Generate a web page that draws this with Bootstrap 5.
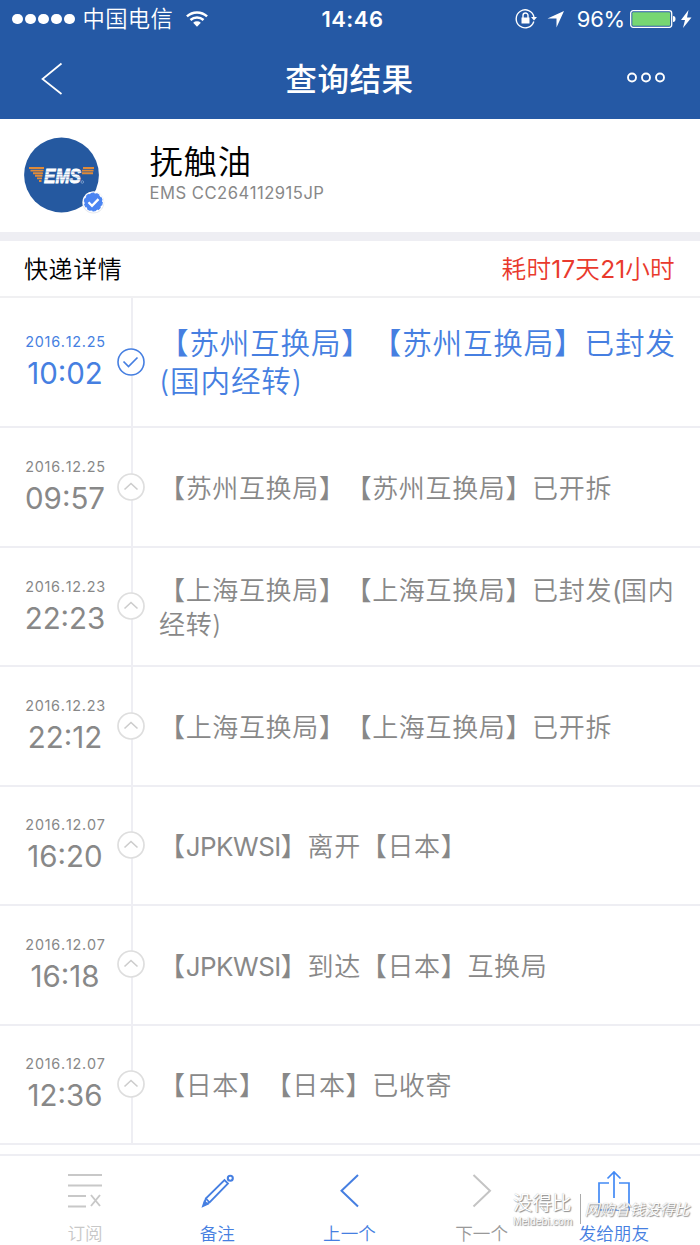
<!DOCTYPE html>
<html lang="zh-CN">
<head>
<meta charset="utf-8">
<meta name="viewport" content="width=device-width, initial-scale=1">
<title>查询结果</title>
<link href="https://cdn.jsdelivr.net/npm/bootstrap@5.3.0/dist/css/bootstrap.min.css" rel="stylesheet">
<style>
body{font-family:Inter,"Noto Sans CJK SC",sans-serif;font-weight:350;width:700px;height:1245px;overflow:hidden;color:#000;line-height:1;white-space:nowrap;text-spacing-trim:space-all;font-feature-settings:"chws" 0,"halt" 0,"kern" 0}
svg{display:block;flex:none}
.topbar{height:119.3px;background:#2559a5;color:#fff}
.statusbar{height:38px;font-size:22px;padding-left:12px;padding-right:8px}
.side-box{width:270px}
.dot{width:10.8px;height:10.8px;border-radius:50%;background:#fff;margin-right:2.3px;flex:none}
.carrier{font-size:22.3px;letter-spacing:.4px;margin-left:5px}
.clock{font-size:22px;font-weight:600;letter-spacing:.5px;padding-left:1px}
.power{font-weight:400;letter-spacing:-.2px}
.navline{height:78px;padding:0 35px 0 41px}
.nav-title{font-size:31.6px;font-weight:500;letter-spacing:.5px;padding-top:5px;padding-right:7px}
.profile{height:112.7px;padding-left:24px}
.logo-wrap{width:125.5px}
.pname{font-size:33.3px;letter-spacing:.8px;line-height:40px}
.pnum{font-size:16.6px;letter-spacing:.5px;color:#888;line-height:22px;font-weight:400}
.ptext{margin-top:-6px}
.gap-band{height:9px;background:#eeeef3}
.detail-head{height:57.5px;padding:2px 25px 0 24px;border-bottom:2px solid #f0f0f2;font-size:24px;letter-spacing:.6px}
.elapsed{color:#e93a2d;font-size:24.6px;letter-spacing:.3px}
.elapsed b{font-weight:400;letter-spacing:0}
.track{height:119.43px;border-bottom:2px solid #eeeef3;color:#888}
.track.latest{height:130px;color:#467fe1}
.when{width:133px;border-right:2px solid #eeeef3;padding-right:1px;font-weight:400}
.tdate{font-size:14.4px;letter-spacing:.75px;line-height:18px;padding-left:1px}
.ttime{font-size:29.5px;line-height:36px;margin-top:4px}
.mark-icon{left:115.700px;top:50%;transform:translateY(-50%);margin-top:-.5px}
.what{padding-left:26px;padding-top:3px;font-size:26px;letter-spacing:.65px;line-height:33.7px}
.latest .what{font-size:29.6px;letter-spacing:.8px;line-height:38px;padding-top:0}
.latin{letter-spacing:-.5px;font-weight:400}
.bottombar{margin-top:9px;height:92px;border-top:2px solid #eeeef3;color:#467fe1;font-size:17.600px;padding-left:19px;padding-right:20px}
.tab-item{width:132.2px;padding-top:14px}
.tab-item span{margin-top:10.500px;line-height:22px}
.off{color:#c8c8c8}.dim{color:#999}
.watermark{left:513px;top:1191px;color:#fff;text-shadow:1px 1px 1px #888,0 0 1px #aaa}
.wm-a{font-size:19.500px;line-height:24px}
.wm-b{font-family:"Liberation Sans",sans-serif;font-size:10.500px;line-height:12px}
.wm-line{width:1px;height:30px;background:#aaa;margin:0 4px 0 7px}
.wm-c{font-size:15px;font-style:italic}
</style>
</head>
<body class="bg-white position-relative">
<header class="topbar">
 <div class="statusbar d-flex align-items-center justify-content-between">
  <div class="side-box d-flex align-items-center"><i class="dot"></i><i class="dot"></i><i class="dot"></i><i class="dot"></i><i class="dot"></i><span class="carrier">中国电信</span>
   <svg class="ms-2 ps-1" width="28" height="20" viewBox="-1 0 25 20" fill="none" stroke="#fff" stroke-width="2.6"><path d="M1 7.2a15.5 15.5 0 0 1 21 0M4.7 11a10.3 10.3 0 0 1 13.6 0"/><path d="M7.5 14a6 6 0 0 1 8 0L11.500 18Z" fill="#fff" stroke="none"/></svg></div>
  <div class="clock">14:46</div>
  <div class="side-box d-flex align-items-center justify-content-end">
   <svg width="23" height="22" viewBox="0 0 23 22" fill="none" stroke="#fff" stroke-width="1.4"><path d="M18.800 13.500A9 9 0 1 1 19 9"/><path d="M16 9h6l-3 3.600Z" fill="#fff" stroke="none"/><path d="M6.500 9.500h8v6h-8Z" fill="#fff" stroke="none"/><path d="M8 10V7.500a2.500 2.500 0 0 1 5 0V10"/></svg>
   <svg class="ms-2 me-2" width="19" height="18" viewBox="0 0 19 18"><path d="M1.500 8.500 18 1 10.500 17.500V8.500Z" fill="#fff"/></svg>
   <span class="power ms-1">96%</span>
   <svg class="ms-1" width="47" height="20" viewBox="0 0 47 20"><rect x="1.700" y="1.700" width="41" height="16.600" rx="2.500" fill="none" stroke="#fff" stroke-width="1.300"/><rect x="3.300" y="3.300" width="37.800" height="13.400" rx="1" fill="#76d672"/><path d="M44 7q2.500 0 2.500 3t-2.500 3Z" fill="#fff"/></svg>
   <svg class="ms-1" width="12" height="18" viewBox="0 0 12 18"><path d="M8.500 0 1 10h4L3 18 11.500 7.500H7Z" fill="#fff"/></svg>
  </div>
 </div>
 <nav class="navline d-flex align-items-center justify-content-between">
  <svg class="mt-1" width="38" height="34" viewBox="0 0 38 34"><path d="M20.500 1.500 1.500 17l19 15" fill="none" stroke="#fff" stroke-width="1.700"/></svg>
  <h1 class="nav-title m-0">查询结果</h1>
  <svg width="38" height="12" viewBox="0 0 38 12" fill="none" stroke="#fff" stroke-width="1.900"><circle cx="5" cy="6.500" r="4"/><circle cx="19" cy="6.500" r="4"/><circle cx="33" cy="6.500" r="4"/></svg>
 </nav>
</header>
<section class="profile d-flex align-items-center">
 <div class="logo-wrap"><svg width="82" height="77" viewBox="0 0 82 77">
  <circle cx="37.500" cy="38" r="37.400" fill="#2559a0"/>
  <path d="M5 31h15M6.500 33.600h13M9 36.200h10M11 38.800h7.500M13 41.400h5M15 44h2.500M59 31h11M58 33.600h11.500M58 36.200h11" stroke="#e08a38" stroke-width="1.900"/>
  <text x="20" y="46" textLength="37" lengthAdjust="spacingAndGlyphs" font-family="Liberation Sans,sans-serif" font-size="20.500" font-weight="700" font-style="italic" fill="#fff" stroke="#fff" stroke-width=".9">EMS</text>
  <path d="M18 34.900h40M18 37.500h40M18 40.100h40M18 42.700h40" stroke="#2559a0" stroke-width=".6" opacity=".6"/>
  <circle cx="58.300" cy="45" r="1.300" fill="none" stroke="#a9bfdf" stroke-width=".6"/>
  <circle cx="69.300" cy="65.500" r="11" fill="#e6e9ee"/><circle cx="69.300" cy="65" r="10.500" fill="#fff"/>
  <circle cx="69.300" cy="65" r="8.900" fill="#4a84f2" stroke="#4a84f2" stroke-width="1.200" stroke-dasharray="3.500 2.090"/>
  <path d="m64.500 65.300 3.500 3.500 6.500-6.700" fill="none" stroke="#fff" stroke-width="2.300"/>
 </svg></div>
 <div class="ptext"><div class="pname">抚触油</div><div class="pnum">EMS CC264112915JP</div></div>
</section>
<div class="gap-band"></div>
<div class="detail-head d-flex align-items-center justify-content-between"><span>快递详情</span><span class="elapsed">耗时<b>17</b>天<b>21</b>小时</span></div>
<svg class="d-none"><defs>
 <g id="up"><circle cx="15" cy="15" r="13" fill="#fff" stroke="#dedede" stroke-width="1.700"/><path d="m8.500 17.500 6.500-6 6.500 6" fill="none" stroke="#ccc" stroke-width="1.600"/></g>
 <g id="ok"><circle cx="15" cy="15" r="13" fill="#fff" stroke="#467fe1" stroke-width="1.600"/><path d="m7.500 14.500 5 5 9-9" fill="none" stroke="#467fe1" stroke-width="1.700"/></g>
</defs></svg>
<main>
 <div class="track latest d-flex position-relative"><div class="when d-flex flex-column align-items-center justify-content-center"><div class="tdate">2016.12.25</div><div class="ttime">10:02</div></div><svg class="mark-icon position-absolute" width="30" height="30"><use href="#ok"/></svg><div class="what align-self-center">【苏州互换局】【苏州互换局】已封发<br>(国内经转)</div></div>
 <div class="track d-flex position-relative"><div class="when d-flex flex-column align-items-center justify-content-center"><div class="tdate">2016.12.25</div><div class="ttime">09:57</div></div><svg class="mark-icon position-absolute" width="30" height="30"><use href="#up"/></svg><div class="what align-self-center">【苏州互换局】【苏州互换局】已开拆</div></div>
 <div class="track d-flex position-relative"><div class="when d-flex flex-column align-items-center justify-content-center"><div class="tdate">2016.12.23</div><div class="ttime">22:23</div></div><svg class="mark-icon position-absolute" width="30" height="30"><use href="#up"/></svg><div class="what align-self-center">【上海互换局】【上海互换局】已封发<span class="latin">(</span>国内<br>经转)</div></div>
 <div class="track d-flex position-relative"><div class="when d-flex flex-column align-items-center justify-content-center"><div class="tdate">2016.12.23</div><div class="ttime">22:12</div></div><svg class="mark-icon position-absolute" width="30" height="30"><use href="#up"/></svg><div class="what align-self-center">【上海互换局】【上海互换局】已开拆</div></div>
 <div class="track d-flex position-relative"><div class="when d-flex flex-column align-items-center justify-content-center"><div class="tdate">2016.12.07</div><div class="ttime">16:20</div></div><svg class="mark-icon position-absolute" width="30" height="30"><use href="#up"/></svg><div class="what align-self-center">【<span class="latin">JPKWSI</span>】离开【日本】</div></div>
 <div class="track d-flex position-relative"><div class="when d-flex flex-column align-items-center justify-content-center"><div class="tdate">2016.12.07</div><div class="ttime">16:18</div></div><svg class="mark-icon position-absolute" width="30" height="30"><use href="#up"/></svg><div class="what align-self-center">【<span class="latin">JPKWSI</span>】到达【日本】互换局</div></div>
 <div class="track d-flex position-relative"><div class="when d-flex flex-column align-items-center justify-content-center"><div class="tdate">2016.12.07</div><div class="ttime">12:36</div></div><svg class="mark-icon position-absolute" width="30" height="30"><use href="#up"/></svg><div class="what align-self-center">【日本】【日本】已收寄</div></div>
</main>
<footer class="bottombar d-flex">
 <div class="tab-item off d-flex flex-column align-items-center"><svg width="36" height="42" viewBox="0 0 36 42" fill="none" stroke="currentColor" stroke-width="1.900"><path d="M1 5h34M1 15.500h34M1 26h18M1 36.500h18M24 25l9 11M33 25l-9 11"/></svg><span>订阅</span></div>
 <div class="tab-item d-flex flex-column align-items-center"><svg width="36" height="42" viewBox="0 0 36 42" fill="none" stroke="currentColor" stroke-width="1.800"><path d="m5 35 1.800-6.500L25.500 10l3.500 3.500L10.500 32.500ZM7 28.500l3.500 4"/><path d="m4 36 1.500-4.500 3 2.500Z" fill="currentColor"/><circle cx="31.300" cy="8.300" r="2.500" stroke-width="2.100"/></svg><span>备注</span></div>
 <div class="tab-item d-flex flex-column align-items-center"><svg width="36" height="42" viewBox="0 0 36 42" fill="none" stroke="currentColor" stroke-width="2"><path d="M27 5 10.500 20.700 27 36.500"/></svg><span>上一个</span></div>
 <div class="tab-item dim d-flex flex-column align-items-center"><svg width="36" height="42" viewBox="0 0 36 42" fill="none" stroke="#c4c4c4" stroke-width="2"><path d="M9.500 5 26 20.700 9.500 36.500"/></svg><span>下一个</span></div>
 <div class="tab-item d-flex flex-column align-items-center"><svg width="36" height="42" viewBox="0 0 36 42" fill="none" stroke="#438af5" stroke-width="1.700"><path d="M13 13H3v27h30V13H23M18 28V2M11.500 8.500 18 2l6.500 6.500"/></svg><span>发给朋友</span></div>
</footer>
<div class="watermark position-absolute d-flex align-items-center"><div><div class="wm-a">没得比</div><div class="wm-b">Meldebi.com</div></div><div class="wm-line"></div><div class="wm-c">网购省钱没得比</div></div>
<script src="https://cdn.jsdelivr.net/npm/bootstrap@5.3.0/dist/js/bootstrap.bundle.min.js"></script>
</body>
</html>
